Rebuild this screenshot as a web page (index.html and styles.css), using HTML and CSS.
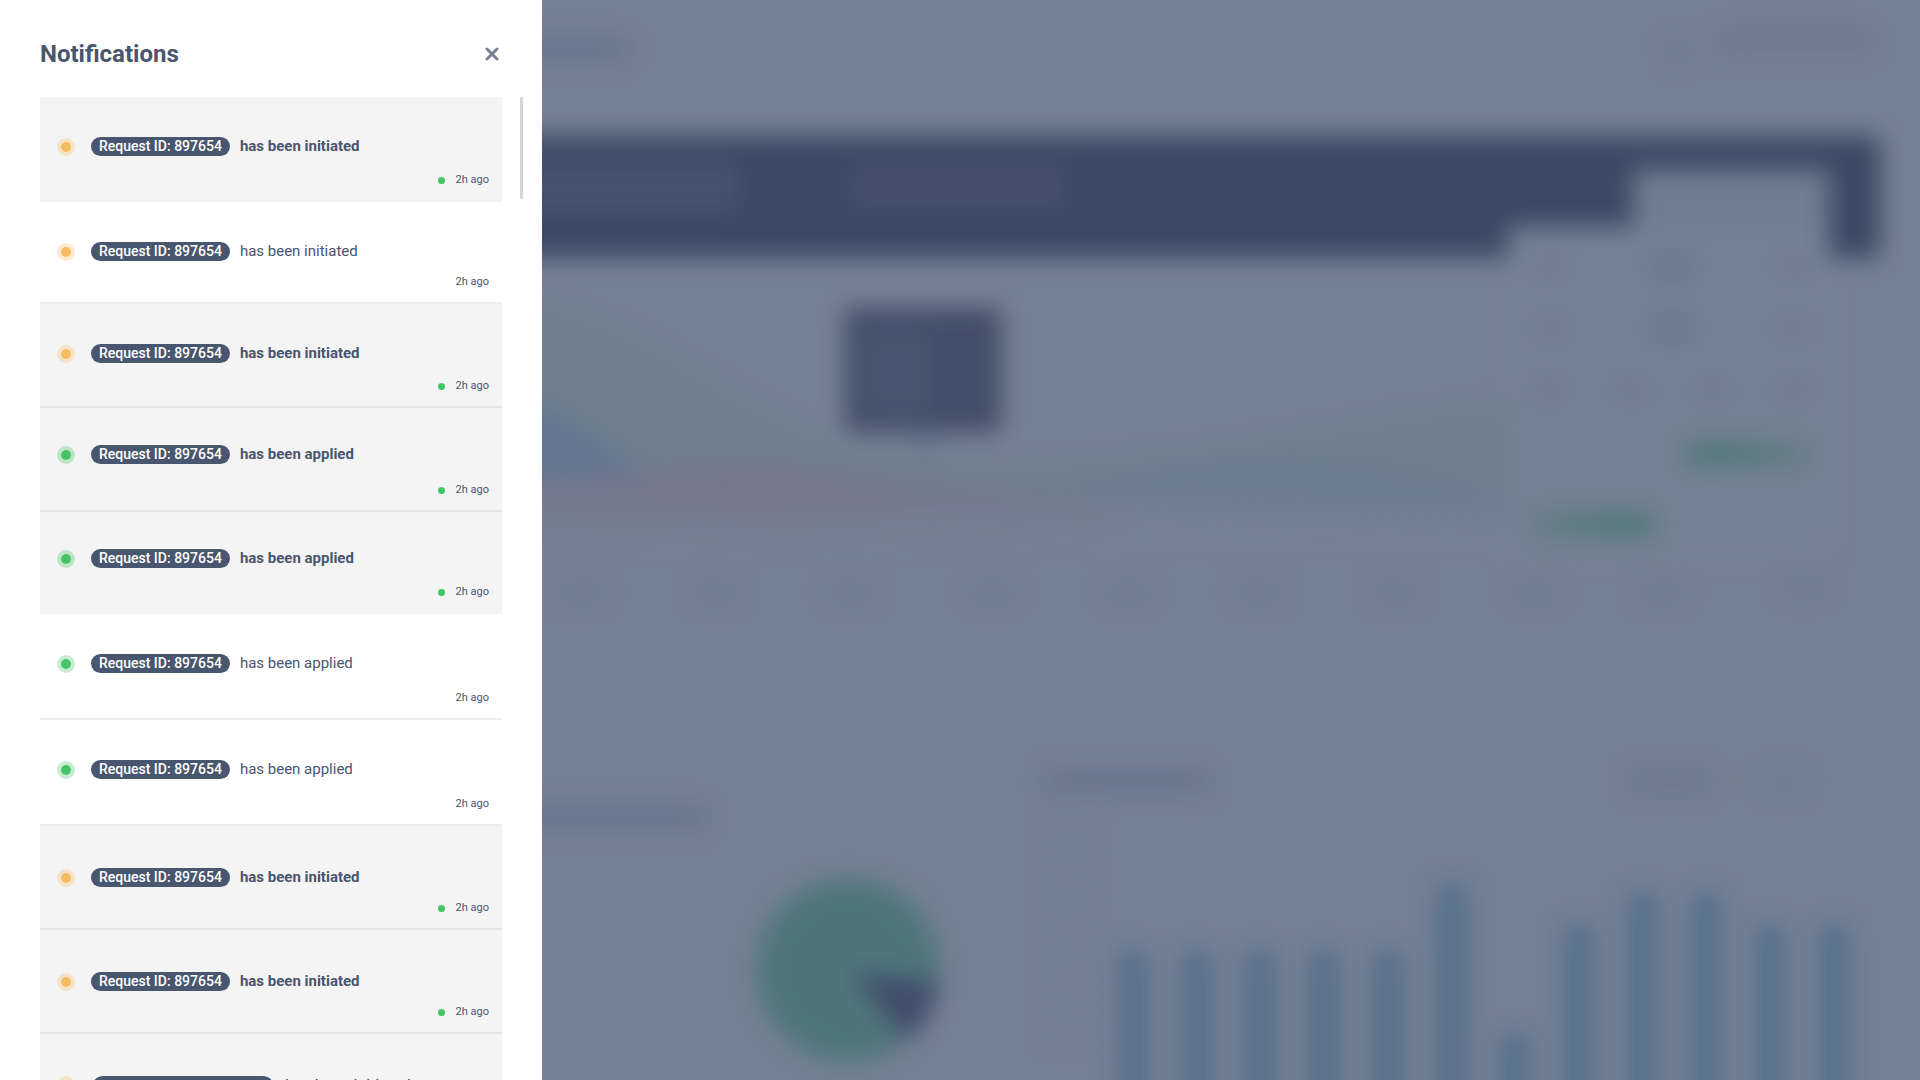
FILE: index.html
```html
<!DOCTYPE html>
<html lang="en">
<head>
<meta charset="utf-8">
<title>Notifications</title>
<link rel="stylesheet" href="styles.css">
</head>
<body>
<aside class="panel" aria-labelledby="panel-title">
  <header class="panel-head">
    <h1 class="panel-title" id="panel-title">Notifications</h1>
    <button class="close" type="button" aria-label="Close">
      <svg width="14" height="14" viewBox="0 0 14 14"><path d="M2 2L12 12M12 2L2 12" fill="none" stroke="currentColor" stroke-width="3" stroke-linecap="round"/></svg>
    </button>
  </header>
  <div class="panel-body">
    <ul class="list">
      <li class="item unread borderless">
        <div class="line"><span class="dot pending"></span><a class="pill" href="#">Request ID: 897654</a><span class="message">has been initiated</span></div>
        <div class="time">2h ago</div>
      </li>
      <li class="item compact">
        <div class="line"><span class="dot pending"></span><a class="pill" href="#">Request ID: 897654</a><span class="message">has been initiated</span></div>
        <div class="time">2h ago</div>
      </li>
      <li class="item unread">
        <div class="line"><span class="dot pending"></span><a class="pill" href="#">Request ID: 897654</a><span class="message">has been initiated</span></div>
        <div class="time">2h ago</div>
      </li>
      <li class="item unread raised">
        <div class="line"><span class="dot done"></span><a class="pill" href="#">Request ID: 897654</a><span class="message">has been applied</span></div>
        <div class="time">2h ago</div>
      </li>
      <li class="item unread raised borderless compact">
        <div class="line"><span class="dot done"></span><a class="pill" href="#">Request ID: 897654</a><span class="message">has been applied</span></div>
        <div class="time">2h ago</div>
      </li>
      <li class="item tall">
        <div class="line"><span class="dot done"></span><a class="pill" href="#">Request ID: 897654</a><span class="message">has been applied</span></div>
        <div class="time">2h ago</div>
      </li>
      <li class="item tall">
        <div class="line"><span class="dot done"></span><a class="pill" href="#">Request ID: 897654</a><span class="message">has been applied</span></div>
        <div class="time">2h ago</div>
      </li>
      <li class="item unread lowered">
        <div class="line"><span class="dot pending"></span><a class="pill" href="#">Request ID: 897654</a><span class="message">has been initiated</span></div>
        <div class="time">2h ago</div>
      </li>
      <li class="item unread lowered">
        <div class="line"><span class="dot pending"></span><a class="pill" href="#">Request ID: 897654</a><span class="message">has been initiated</span></div>
        <div class="time">2h ago</div>
      </li>
      <li class="item unread lowered large">
        <div class="line"><span class="dot pending"></span><a class="pill" href="#">Request ID: 897654</a><span class="message">has been initiated</span></div>
        <div class="time">2h ago</div>
      </li>
    </ul>
    <div class="thumb"></div>
  </div>
</aside>
<main class="dashboard" aria-hidden="true">
  <div class="topbar">
    <span class="smudge crumb"></span>
    <span class="smudge bell"></span>
    <span class="smudge user"></span>
  </div>
  <div class="hero">
    <span class="stat first"></span>
    <span class="stat second"></span>
    <div class="date-button"></div>
    <div class="calendar">
      <div class="cal-row"><i></i><i class="strong"></i><i></i></div>
      <div class="cal-row"><i></i><i class="strong"></i><i></i></div>
      <div class="cal-row"><i></i><i></i><i></i><i></i></div>
      <div class="range range-end"></div>
      <div class="range range-start"></div>
    </div>
  </div>
  <svg class="trend" viewBox="502 258 1378 432" preserveAspectRatio="none">
    <defs>
      <linearGradient id="red" x1="0" x2="1"><stop offset="0" stop-color="#72778b"/><stop offset=".4" stop-color="#76748a"/><stop offset="1" stop-color="#727b8f"/></linearGradient>
      <linearGradient id="redfade" x1="0" x2="0" y1="0" y2="1"><stop offset="0" stop-color="#758194" stop-opacity="0"/><stop offset="1" stop-color="#758194"/></linearGradient>
    </defs>
    <path fill="#70808f" d="M502 300C600 310 650 350 740 400S880 462 1000 468C1200 470 1360 420 1510 405V500H502Z"/>
    <path fill="#64778f" d="M502 395C570 405 600 440 650 475L700 500H502Z"/>
    <path fill="#6b7c8f" d="M1000 490C1150 480 1200 455 1300 458S1440 480 1510 490V520L1000 500Z"/>
    <path fill="url(#red)" d="M502 485C600 480 680 465 760 468S900 490 1160 498L1100 530L502 540Z"/>
    <rect x="502" y="478" width="1008" height="64" fill="url(#redfade)"/>
    <rect x="845" y="308" width="156" height="124" rx="4" fill="#424d67"/>
    <rect x="862" y="330" width="70" height="84" fill="#47566e"/>
    <path fill="#65758a" d="M912 432H936L924 462Z"/>
    <g fill="#6d798e">
      <rect x="560" y="586" width="44" height="14"/><rect x="693" y="586" width="44" height="14"/><rect x="828" y="586" width="44" height="14"/><rect x="970" y="586" width="44" height="14"/><rect x="1106" y="586" width="44" height="14"/><rect x="1236" y="586" width="44" height="14"/><rect x="1373" y="586" width="44" height="14"/><rect x="1513" y="586" width="44" height="14"/><rect x="1640" y="586" width="44" height="14"/><rect x="1783" y="580" width="44" height="14"/>
    </g>
  </svg>
  <div class="cards">
    <section class="card-pie">
      <span class="smudge pie-title"></span>
      <svg class="pie" width="184" height="184" viewBox="-92 -92 184 184">
        <circle r="92" fill="#4e767a"/>
        <path fill="#414c6a" d="M4 2L91 12A92 92 0 0 1 59 71Z"/>
      </svg>
    </section>
    <section class="card-bars">
      <div class="bars-head"><span class="smudge bars-title"></span><span class="smudge filter"></span><span class="smudge filter-light"></span></div>
      <div class="plot">
        <div class="axis"><i></i><i></i><i></i><i></i><i></i></div>
        <div class="bars">
          <b style="height:250px"></b><b style="height:250px"></b><b style="height:250px"></b><b style="height:250px"></b><b style="height:250px"></b><b style="height:317px"></b><b style="height:167px"></b><b style="height:275px"></b><b style="height:307px"></b><b style="height:307px"></b><b style="height:275px"></b><b style="height:275px"></b>
        </div>
      </div>
    </section>
  </div>
</main>
</body>
</html>
```
FILE: styles.css
```css
* { box-sizing: border-box; }

body {
  margin: 0;
  display: flex;
  height: 100vh;
  overflow: hidden;
  background: #758194;
  color: #48566f;
  font-family: Roboto, "Liberation Sans", sans-serif;
}

/* Notification drawer */
.panel {
  position: relative;
  z-index: 1;
  flex: 0 0 542px;
  display: flex;
  flex-direction: column;
  padding-left: 40px;
  background: #fff;
}
.panel-head {
  display: flex;
  align-items: center;
  justify-content: space-between;
  flex: none;
  height: 97px;
  padding: 10px 40px 0 0;
}
.panel-title {
  margin: 0;
  font-size: 24px;
  line-height: 32px;
  font-weight: 700;
}
.close {
  display: flex;
  padding: 3px;
  border: 0;
  background: none;
  color: #7b8194;
}
.panel-body {
  flex: 1;
  min-height: 0;
  display: flex;
  gap: 18px;
}
.list {
  flex: 0 0 462px;
  margin: 0;
  padding: 0;
  list-style: none;
  overflow: hidden;
}
.thumb {
  width: 3px;
  height: 102px;
  border-radius: 2px;
  background: #d4d5da;
}
.item {
  display: flex;
  flex-direction: column;
  justify-content: space-between;
  min-height: 104px;
  padding: 40px 13px 12px 17px;
  border-bottom: 2px solid #ededee;
}
.unread { background: #f4f4f4; border-color: #e5e5e5; }
.borderless { min-height: 105px; border-bottom: 0; padding-bottom: 14px; }
.compact { min-height: 102px; }
.tall { min-height: 106px; }
.raised { padding-top: 37px; }
.lowered { padding-top: 42px; }

.line { display: flex; align-items: center; height: 19px; }
.dot {
  flex: none;
  width: 18px;
  height: 18px;
  border: 4px solid;
  border-radius: 50%;
  background-clip: padding-box;
}
.pending { background-color: #f6bc5f; border-color: #f6bc5f4d; }
.done { background-color: #45c467; border-color: #45c4674d; }
.pill {
  margin-left: 16px;
  padding: 0 8px;
  border-radius: 13px;
  background: #48566f;
  color: #fff;
  font-size: 14px;
  line-height: 19px;
  font-weight: 500;
  text-decoration: none;
}
.message { margin-left: 10px; font-size: 15px; line-height: 19px; }
.unread .message { font-weight: 700; }
.time {
  display: flex;
  align-items: center;
  justify-content: flex-end;
  gap: 11px;
  font-size: 11px;
  line-height: 16px;
}
.unread .time::before {
  content: "";
  width: 7px;
  height: 7px;
  border-radius: 50%;
  background: #45c467;
}
.large .line { align-items: flex-start; height: 25px; }
.large .pill { padding: 0 13px; font-size: 18px; line-height: 25px; }
.large .message { font-size: 16px; font-weight: 400; color: #333; }

/* Dashboard behind the drawer, out of focus */
.dashboard {
  flex: 1;
  min-width: 0;
  margin-left: -40px;
  filter: blur(12px);
}
.topbar {
  display: flex;
  align-items: flex-start;
  height: 136px;
  padding: 30px 50px 0 0;
}
.smudge { display: block; height: 22px; border-radius: 4px; background: #67738a; }
.crumb { width: 126px; margin: 8px auto 0 0; }
.bell { width: 18px; margin: 10px 32px 0 0; background: #6b778f; }
.user { width: 152px; background: #6c778d; }
.hero {
  position: relative;
  display: flex;
  align-items: center;
  height: 122px;
  margin-right: 40px;
  background: #3b4963;
}
.stat { height: 50px; margin-bottom: 20px; background: #46536d; }
.first { width: 236px; }
.second { width: 216px; margin-left: 112px; background: #454f69; }
.date-button {
  position: absolute;
  right: 51px;
  top: 34px;
  width: 196px;
  height: 64px;
  background: #6f7e90;
}
.calendar {
  position: absolute;
  z-index: 1;
  right: 51px;
  top: 91px;
  width: 321px;
  height: 330px;
  padding: 28px 20px 28px 26px;
  background: #758194;
}
.cal-row { display: flex; justify-content: space-between; margin-bottom: 40px; }
.cal-row i { width: 32px; height: 22px; background: #707b8f; }
.cal-row .strong { width: 44px; background: #69788c; }
.range { width: 128px; height: 26px; border-radius: 13px; }
.range-end { margin-left: auto; background: linear-gradient(90deg, #54787a 40%, #667c86); }
.range-start { margin: 44px 0 0 -4px; background: linear-gradient(270deg, #54787a 40%, #667c86); }
.trend { display: block; width: calc(100% - 40px); height: 432px; }

.cards { display: flex; padding-right: 40px; }
.card-pie { flex: 0 0 543px; padding-top: 116px; }
.pie-title { width: 204px; }
.pie { display: block; margin: 50px 0 0 254px; }
.card-bars { flex: 1; padding-top: 80px; }
.bars-head { display: flex; }
.bars-title { width: 164px; margin-right: auto; }
.filter { width: 80px; background: #6b778c; }
.filter-light { width: 40px; margin: 0 76px 0 54px; background: #707e92; }
.plot { display: flex; margin-top: 24px; }
.axis { width: 72px; }
.axis i { display: block; width: 46px; height: 20px; margin-bottom: 31px; background: #727e92; }
.bars {
  flex: 1;
  display: flex;
  align-items: flex-end;
  justify-content: space-between;
  height: 384px;
  padding-right: 30px;
}
.bars b { width: 32px; background: #56708b; }
```
